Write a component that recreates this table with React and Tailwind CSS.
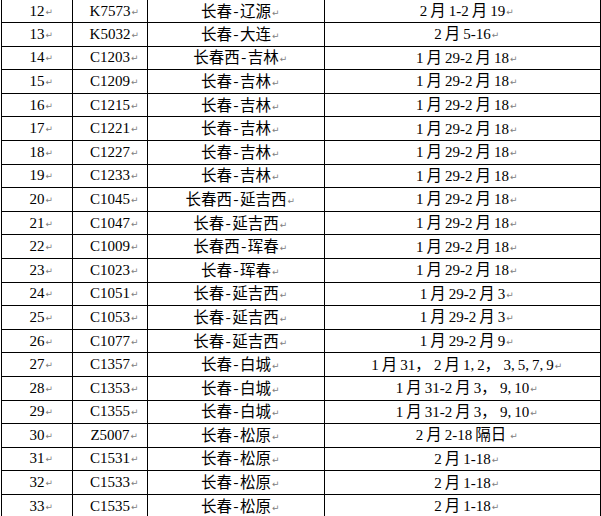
import React from "react";

const rows = [
  ["12", "K7573", "长春-辽源", "2月1-2月19"],
  ["13", "K5032", "长春-大连", "2月5-16"],
  ["14", "C1203", "长春西-吉林", "1月29-2月18"],
  ["15", "C1209", "长春-吉林", "1月29-2月18"],
  ["16", "C1215", "长春-吉林", "1月29-2月18"],
  ["17", "C1221", "长春-吉林", "1月29-2月18"],
  ["18", "C1227", "长春-吉林", "1月29-2月18"],
  ["19", "C1233", "长春-吉林", "1月29-2月18"],
  ["20", "C1045", "长春西-延吉西", "1月29-2月18"],
  ["21", "C1047", "长春-延吉西", "1月29-2月18"],
  ["22", "C1009", "长春西-珲春", "1月29-2月18"],
  ["23", "C1023", "长春-珲春", "1月29-2月18"],
  ["24", "C1051", "长春-延吉西", "1月29-2月3"],
  ["25", "C1053", "长春-延吉西", "1月29-2月3"],
  ["26", "C1077", "长春-延吉西", "1月29-2月9"],
  ["27", "C1357", "长春-白城", "1月31， 2月1,2， 3,5,7,9"],
  ["28", "C1353", "长春-白城", "1月31-2月3， 9,10"],
  ["29", "C1355", "长春-白城", "1月31-2月3， 9,10"],
  ["30", "Z5007", "长春-松原", "2月2-18隔日"],
  ["31", "C1531", "长春-松原", "2月1-18"],
  ["32", "C1533", "长春-松原", "2月1-18"],
  ["33", "C1535", "长春-松原", "2月1-18"],
];

function Mark() {
  return (
    <span className="absolute left-full bottom-[2px] pl-[1px] text-[9px] leading-none text-[#808080] font-['DejaVu_Sans',sans-serif]">
      ↵
    </span>
  );
}

function Auto({ s }) {
  const parts = s.split(/([\u4e00-\u9fff]+|,)/);
  return parts.map((p, i) =>
    /[\u4e00-\u9fff]/.test(p) ? (
      <span key={i} className="mx-[3px] text-[15.5px]">
        {p}
      </span>
    ) : p === "," ? (
      <span key={i} className="mr-[3px]">
        ,
      </span>
    ) : (
      <span key={i}>{p}</span>
    )
  );
}

function Route({ s }) {
  const [a, b] = s.split("-");
  return (
    <span className="font-['Noto_Sans_CJK_SC',sans-serif] text-[15.5px]">
      {a}
      <span className="inline-block w-[8px] text-center">-</span>
      {b}
    </span>
  );
}

function Cell({ w, children }) {
  return (
    <div
      className={`${w} flex items-center justify-center border-r border-black`}
    >
      <span className="relative whitespace-nowrap">
        {children}
        <Mark />
      </span>
    </div>
  );
}

export default function App() {
  return (
    <div className="w-[601px] h-[516px] overflow-hidden bg-white">
      <div className="ml-[1px] w-[600px] border-l border-black text-[15px] leading-none text-black font-['Liberation_Serif','Noto_Sans_CJK_SC',serif]">
        {rows.map((r, i) => (
          <div
            key={r[0]}
            className={`flex border-b border-black ${i === 0 ? "h-[23px]" : "h-[23.6px]"}`}
          >
            <Cell w="w-[71px]">{r[0]}</Cell>
            <Cell w="w-[75px]">{r[1]}</Cell>
            <Cell w="w-[177px]">
              <Route s={r[2]} />
            </Cell>
            <Cell w="w-[276px]">
              <Auto s={r[3]} />
            </Cell>
          </div>
        ))}
      </div>
    </div>
  );
}
